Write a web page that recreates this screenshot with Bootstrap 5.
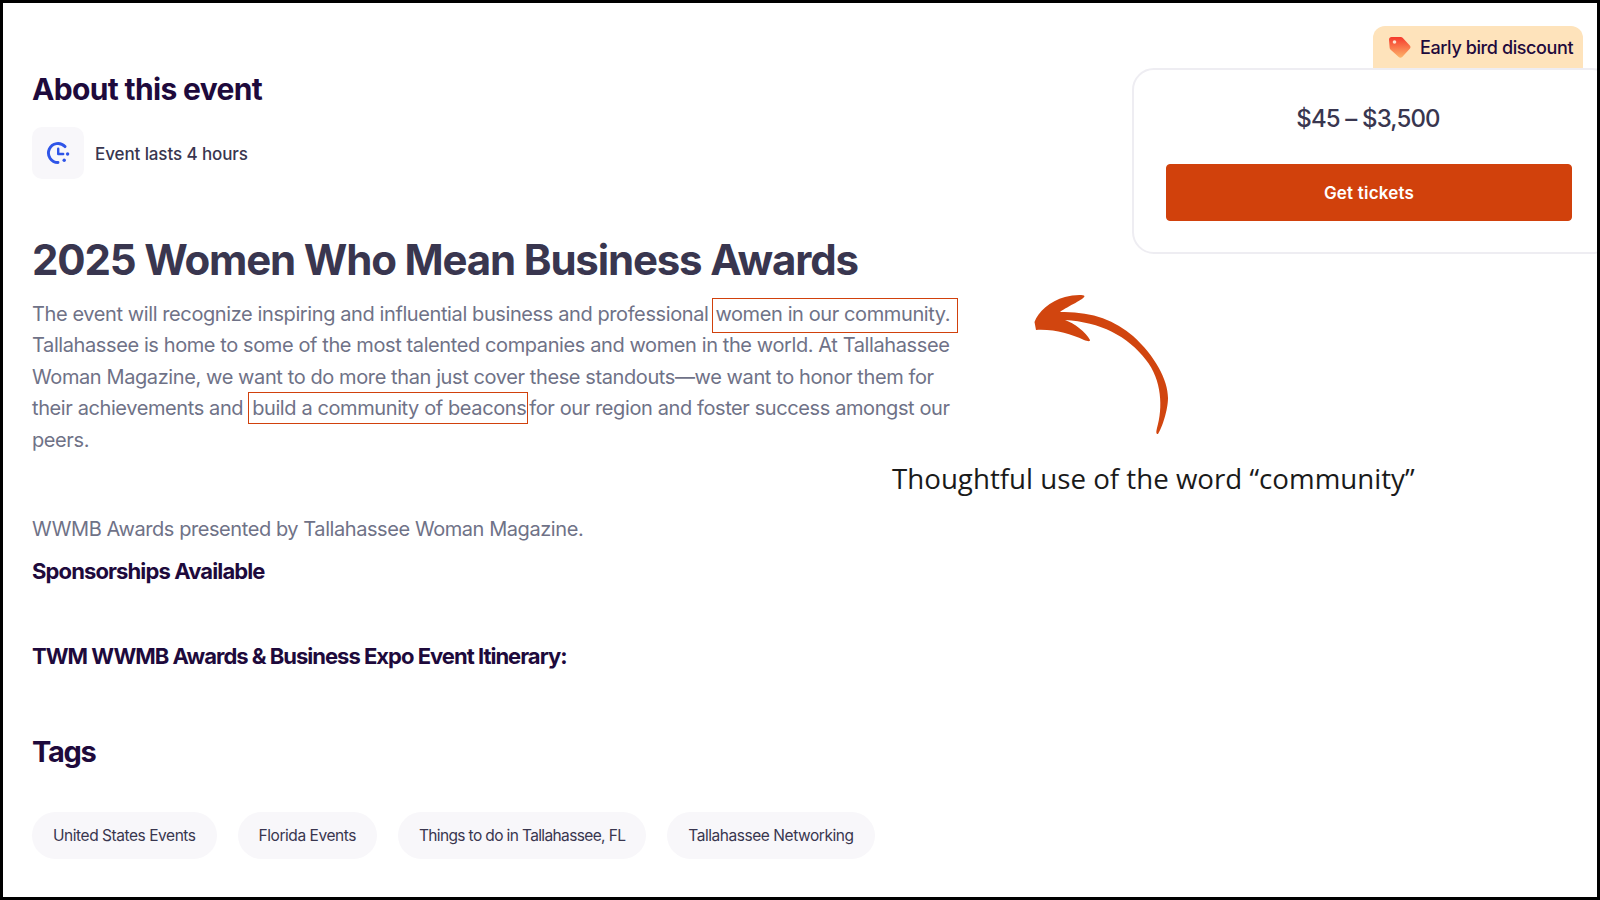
<!DOCTYPE html>
<html lang="en">
<head>
    <meta charset="UTF-8">
    <title>2025 Women Who Mean Business Awards</title>
    <link href="https://cdn.jsdelivr.net/npm/bootstrap@5.3.0/dist/css/bootstrap.min.css" rel="stylesheet">
    <style>
        html, body { height: 100%; overflow: hidden; background: #fff; }
        body { font-family: Inter, "Liberation Sans", sans-serif; }
        .frame { width: 1600px; height: 900px; border: 3px solid #000; overflow: hidden; position: relative; }
        .left-col { width: 1020px; padding: 67px 0 0 29px; flex: none; }
        .right-col { width: 574px; flex: none; }
        .about-title { font-size: 30px; font-weight: 700; line-height: 38px; letter-spacing: -0.65px; color: #1e0a3c; margin: 0 0 19px; }
        .clock-tile { width: 52px; height: 52px; background: #f8f7fa; border-radius: 10px; }
        .lasts { font-size: 17px; font-weight: 500; letter-spacing: -0.1px; line-height: 24px; padding-top: 2px; color: #39364f; margin-left: 11px; }
        .event-title { font-size: 42px; font-weight: 700; line-height: 52px; letter-spacing: -1.17px; color: #39364f; margin: 55px 0 13px; }
        .event-text { font-size: 20px; line-height: 31.4px; letter-spacing: -0.4px; color: #6f7287; margin: 0; }
        .boxed { border: 1px solid #d1410c; padding: 3px 7px 6px 2px; margin-left: 4px; }
        .boxed.snug { padding: 3px 1px 3px 3px; margin-left: 5px; margin-right: 1px; }
        .presented { font-size: 20px; line-height: 31px; letter-spacing: -0.43px; color: #6f7287; margin: 58px 0 0; }
        .sub-head { font-size: 22px; font-weight: 700; line-height: 30px; letter-spacing: -0.88px; color: #1e0a3c; margin: 11px 0 0; }
        .sub-head.gap-top { margin-top: 55px; letter-spacing: -1px; }
        .tags-title { font-size: 29px; font-weight: 700; line-height: 38px; letter-spacing: -1.3px; color: #1e0a3c; margin: 62px 0 41px; }
        .tag-row { column-gap: 21px; }
        .tag-pill { height: 47px; padding: 0 21px; background: #f8f7fa; border-radius: 24px; font-size: 15.5px; letter-spacing: -0.45px; color: #39364f; }
        .tag-pill.tighter { letter-spacing: -0.63px; }
        .ticket-wrap { padding-top: 23px; margin-left: 109px; width: 482px; }
        .discount { width: 210px; height: 42px; margin-left: 241px; background: #fee3bb; border-radius: 12px 12px 0 0; padding-left: 15px; font-size: 18px; font-weight: 500; letter-spacing: -0.4px; color: #1e0a3c; }
        .tag-ico { margin-top: 2px; }
        .ticket-panel { height: 186px; border: 2px solid #eeedf2; border-radius: 22px; background: #fff; padding: 0 32px; }
        .price { width: 406px; font-size: 24px; font-weight: 500; letter-spacing: -0.85px; color: #39364f; line-height: 30px; margin: 34px 0 30px -1px; }
        .btn-tickets { width: 406px; height: 57px; padding-top: 8px; background: #d1410c; border-color: #d1410c; color: #fff; font-size: 17px; font-weight: 600; letter-spacing: .2px; border-radius: 4px; }
        .btn-tickets:hover { background: #d1410c; border-color: #d1410c; color: #fff; }
        .arrow-pic { position: absolute; left: 997px; top: 277px; }
        .annotation { position: absolute; left: 889px; top: 456px; white-space: nowrap; font-family: "Open Sans", sans-serif; font-size: 27.7px; line-height: 38px; color: #1a1a1a; margin: 0; }
    </style>
</head>
<body>
    <div class="frame d-flex">
        <div class="left-col">
            <h2 class="about-title">About this event</h2>
            <div class="d-flex align-items-center">
                <div class="clock-tile d-flex align-items-center justify-content-center">
                    <svg width="24" height="24" viewBox="0 0 24 24" fill="none">
                        <path d="M19 5.6A9.5 9.5 0 1 0 12 21.5" stroke="#2f55e8" stroke-width="2.9" stroke-linecap="round"/>
                        <path d="M12.2 7.8v5.2h5" stroke="#2f55e8" stroke-width="2.4" stroke-linecap="round" stroke-linejoin="round"/>
                        <circle cx="21.6" cy="13" r="1.7" fill="#2f55e8"/>
                        <circle cx="18.2" cy="19.2" r="1.7" fill="#2f55e8"/>
                    </svg>
                </div>
                <span class="lasts">Event lasts 4 hours</span>
            </div>
            <h1 class="event-title">2025 Women Who Mean Business Awards</h1>
            <p class="event-text">The event will recognize inspiring and influential business and professional<span class="boxed">women in our community.</span><br>
            Tallahassee is home to some of the most talented companies and women in the world. At Tallahassee<br>
            Woman Magazine, we want to do more than just cover these standouts—we want to honor them for<br>
            their achievements and<span class="boxed snug">build a community of beacons</span>for our region and foster success amongst our<br>
            peers.</p>
            <p class="presented">WWMB Awards presented by Tallahassee Woman Magazine.</p>
            <h3 class="sub-head">Sponsorships Available</h3>
            <h3 class="sub-head gap-top">TWM WWMB Awards &amp; Business Expo Event Itinerary:</h3>
            <h2 class="tags-title">Tags</h2>
            <div class="d-flex tag-row">
                <span class="tag-pill d-flex align-items-center">United States Events</span>
                <span class="tag-pill d-flex align-items-center">Florida Events</span>
                <span class="tag-pill tighter d-flex align-items-center">Things to do in Tallahassee, FL</span>
                <span class="tag-pill d-flex align-items-center">Tallahassee Networking</span>
            </div>
        </div>
        <div class="right-col">
            <div class="ticket-wrap">
                <div class="discount d-flex align-items-center gap-2">
                    <svg class="tag-ico" width="24" height="24" viewBox="0 0 24 24">
                        <defs><linearGradient id="tagFill" x1="0" y1="0" x2="0" y2="1"><stop offset="0" stop-color="#f5392c"/><stop offset="1" stop-color="#fdb46a"/></linearGradient></defs>
                        <path d="M3.5 1h9.3c.7 0 1.3.3 1.8.8l7.2 7.6c.9 1 .9 2.4 0 3.4l-7.6 8.2c-1 1-2.5 1-3.5.1L2.4 13.4c-.5-.5-.8-1.1-.8-1.8L1 3.5C1 2.1 2.1 1 3.5 1z" fill="url(#tagFill)"/>
                        <circle cx="6.5" cy="6" r="1.8" fill="#fde3d0"/>
                    </svg>
                    <span>Early bird discount</span>
                </div>
                <div class="ticket-panel">
                    <div class="price text-center">$45 – $3,500</div>
                    <button type="button" class="btn btn-tickets">Get tickets</button>
                </div>
            </div>
        </div>
        <!-- annotation drawn over the page -->
        <svg class="arrow-pic" width="200" height="170" viewBox="0 0 200 170">
            <path d="M34.5 42C38 32 50 21 65 17C72 15 83 14 84.5 16C85 19 68 26 60 32C90 31 115 40 133 56C155 76 168 100 168 118C168 130 162 148 158 154C156 154 156 152 157 148C163 128 162 100 146 80C128 56 100 42 65 40C74 43 86 52 90 60C90 62 87 61 84 60C70 54 55 49 36 50Z" fill="#d1450f"/>
        </svg>
        <p class="annotation">Thoughtful use of the word “community”</p>
    </div>
</body>
</html>
